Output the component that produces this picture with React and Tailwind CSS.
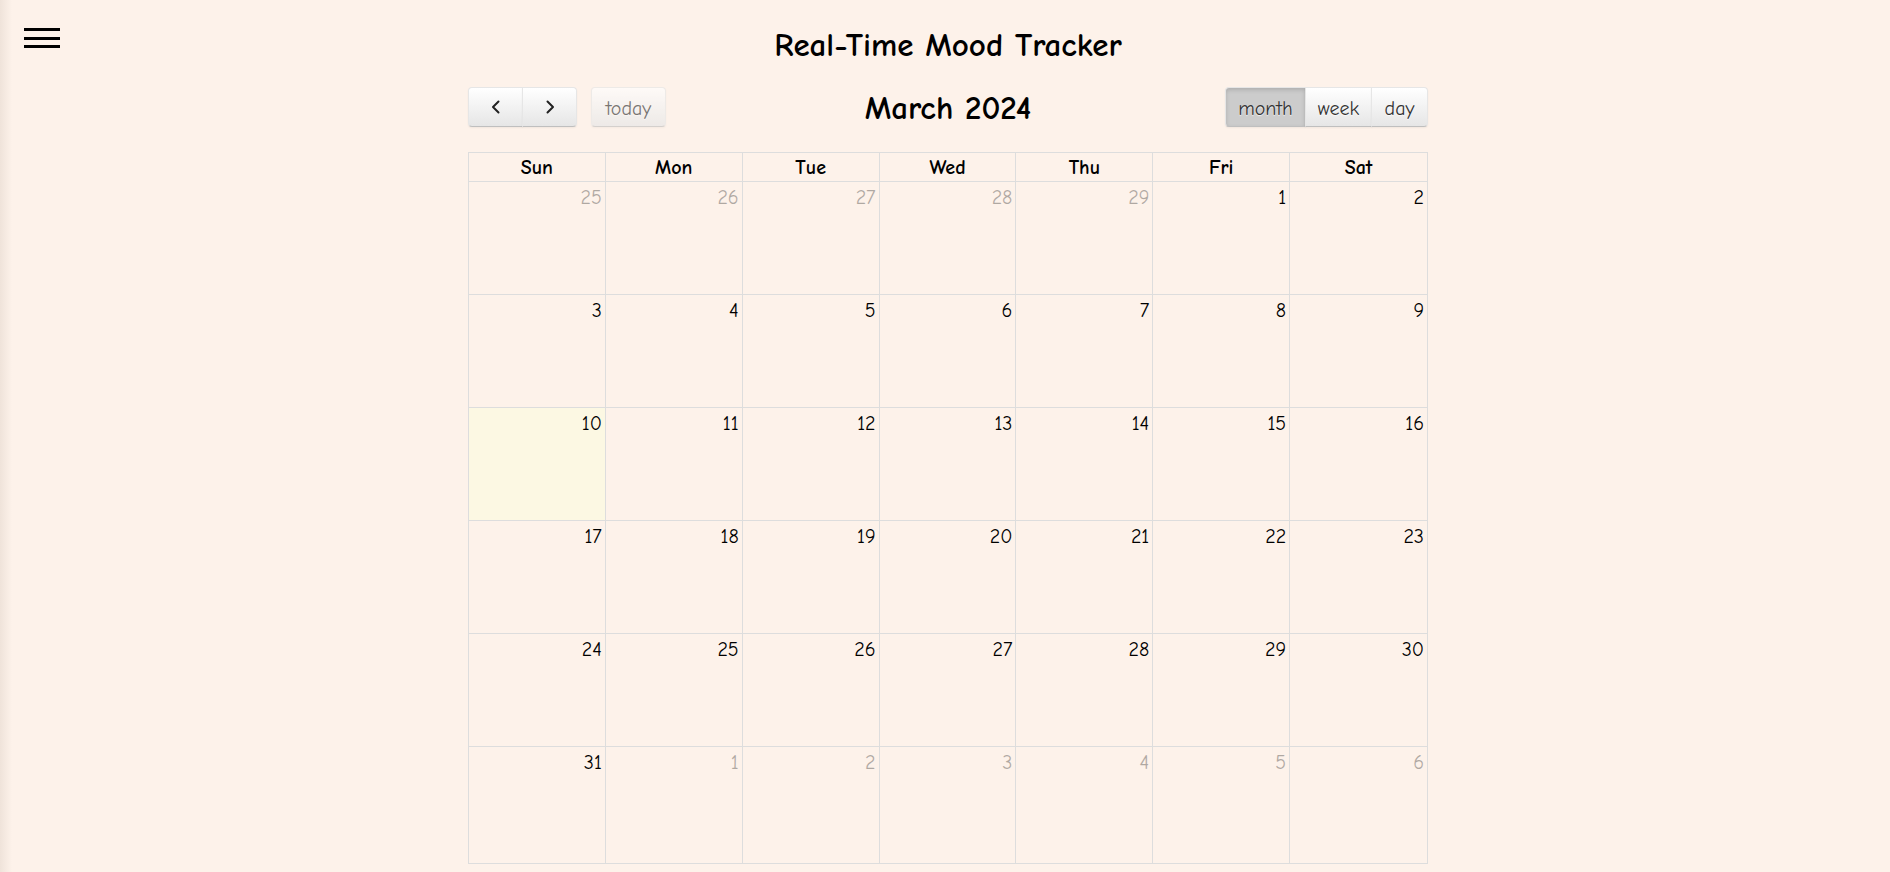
import { useState } from "react";

const font = "[font-family:'Comic_Sans_MS','Comic_Neue','DejaVu_Sans',sans-serif]";

const dayNames = ["Sun", "Mon", "Tue", "Wed", "Thu", "Fri", "Sat"];

function buildWeeks() {
  const cells = [];
  for (let d = 25; d <= 29; d++) cells.push({ day: d, other: true });
  for (let d = 1; d <= 31; d++) cells.push({ day: d, other: false, today: d === 10 });
  for (let d = 1; d <= 6; d++) cells.push({ day: d, other: true });
  const weeks = [];
  for (let i = 0; i < cells.length; i += 7) weeks.push(cells.slice(i, i + 7));
  return weeks;
}

const btn =
  "h-10 border border-[#e6e6e6] border-b-[#bfbfbf] bg-linear-to-b from-white to-[#e6e6e6] pt-[3px] text-[#333] text-[20px] shadow-[inset_0_1px_0_rgba(255,255,255,0.2),0_1px_2px_rgba(0,0,0,0.05)] [text-shadow:0_1px_1px_rgba(255,255,255,0.75)]";

export default function App() {
  const [view, setView] = useState("month");
  const weeks = buildWeeks();

  return (
    <div className={`relative min-h-[872px] bg-[#fdf2ea] ${font} text-black`}>
      <div className="absolute inset-y-0 left-0 w-[12px] bg-linear-to-r from-[#efe3da] to-[#fdf2ea]" />
      <button type="button" className="absolute left-[24px] top-[28px] flex w-[36px] flex-col gap-[5.5px]">
        <span className="h-[3px] w-full bg-black" />
        <span className="h-[3px] w-full bg-black" />
        <span className="h-[3px] w-full bg-black" />
      </button>

      <div className="flex flex-col items-center pl-[6px] pt-[25px]">
        <h1 className="text-[33px] font-bold leading-[40px]">Real-Time Mood Tracker</h1>

        <div className="mt-[22px] w-[960px]">
          <div className="flex h-10 items-center justify-between">
            <div className="flex w-[300px] items-center gap-[14px]">
              <div className="flex">
                <button type="button" className={`${btn} flex w-[55px] items-center justify-center rounded-l-[4px] !pt-0`}>
                  <svg width="14" height="16" viewBox="0 0 14 16" fill="none" stroke="#222" strokeWidth="2" strokeLinecap="round" strokeLinejoin="round">
                    <path d="M9.5 2.5 4 8l5.5 5.5" />
                  </svg>
                </button>
                <button type="button" className={`${btn} -ml-px flex w-[55px] items-center justify-center rounded-r-[4px] !pt-0`}>
                  <svg width="14" height="16" viewBox="0 0 14 16" fill="none" stroke="#222" strokeWidth="2" strokeLinecap="round" strokeLinejoin="round">
                    <path d="M4.5 2.5 10 8l-5.5 5.5" />
                  </svg>
                </button>
              </div>
              <button type="button" className={`${btn} w-[75px] rounded-[4px] opacity-65`}>
                today
              </button>
            </div>
            <h2 className="pt-[3px] text-[33px] font-bold leading-none">March 2024</h2>
            <div className="flex w-[300px] justify-end">
              {[
                ["month", "w-[81px] rounded-l-[4px]"],
                ["week", "w-[67px] -ml-px"],
                ["day", "w-[57px] -ml-px rounded-r-[4px]"],
              ].map(([v, cls]) => (
                <button
                  key={v}
                  type="button"
                  onClick={() => setView(v)}
                  className={`${btn} ${cls} ${
                    view === v ? "bg-none bg-[#cccccc] shadow-[inset_0_2px_4px_rgba(0,0,0,0.15),0_1px_2px_rgba(0,0,0,0.05)]" : ""
                  }`}
                >
                  {v}
                </button>
              ))}
            </div>
          </div>

          <div className="mt-[25px] border border-[#dddddd]">
            <div className="grid h-[28px] grid-cols-7">
              {dayNames.map((d, i) => (
                <div
                  key={d}
                  className={`flex items-center justify-center pt-[2px] text-[20px] font-bold leading-none ${i < 6 ? "border-r border-[#dddddd]" : ""}`}
                >
                  {d}
                </div>
              ))}
            </div>
            {weeks.map((week, wi) => (
              <div key={wi} className={`grid grid-cols-7 border-t border-[#dddddd] ${wi === 5 ? "h-[117px]" : "h-[113px]"}`}>
                {week.map((c, i) => (
                  <div
                    key={i}
                    className={`px-[3px] pt-[4px] text-right text-[20px] leading-[24px] ${i < 6 ? "border-r border-[#dddddd]" : ""} ${
                      c.today ? "bg-[#fcf8e3]" : ""
                    }`}
                  >
                    <span className={c.other ? "opacity-30" : ""}>{c.day}</span>
                  </div>
                ))}
              </div>
            ))}
          </div>
        </div>
      </div>
    </div>
  );
}
